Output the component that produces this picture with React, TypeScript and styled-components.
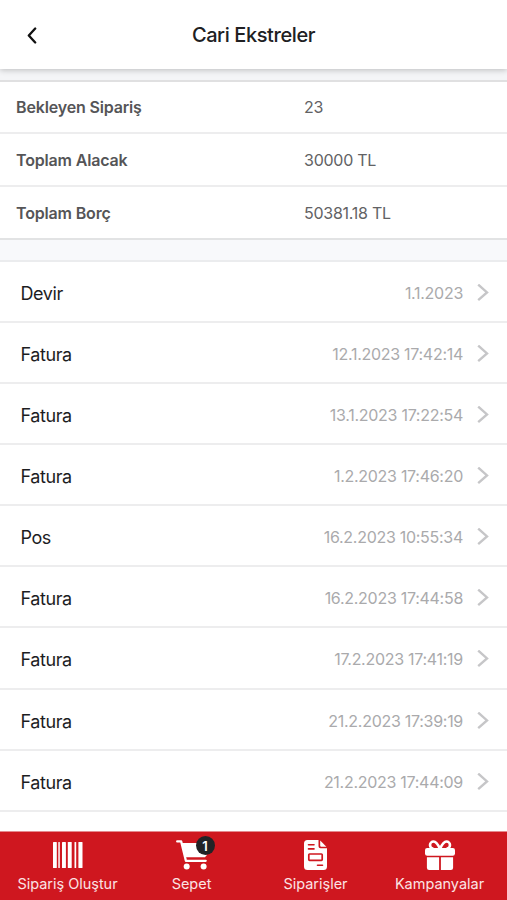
import React from "react";
import styled, { createGlobalStyle } from "styled-components";

const GlobalStyle = createGlobalStyle`
  * { box-sizing: border-box; }
  body { margin: 0; background: #fff; font-family: Inter, "Liberation Sans", sans-serif; }
`;

const Screen = styled.div`
  display: flex;
  flex-direction: column;
  height: 900px;
  overflow: hidden;
  background: #fff;
`;

const Header = styled.header`
  display: grid;
  grid-template-columns: 64px 1fr 64px;
  align-items: center;
  flex: none;
  height: 69px;
  background: #fff;
  box-shadow: 0 1px 6px rgba(0, 0, 0, 0.24);
  z-index: 1;
`;

const BackButton = styled.button`
  display: flex;
  align-items: center;
  justify-content: center;
  padding: 2px 0 0;
  border: 0;
  background: none;
  color: #111;
`;

const Title = styled.h1`
  margin: 1px 0 0;
  font-size: 20px;
  line-height: 24px;
  font-weight: 500;
  letter-spacing: -0.4px;
  text-align: center;
  color: #202022;
`;

const Summary = styled.dl`
  flex: none;
  margin: 0;
  padding-top: 11px;
  background: #f4f5f7;
`;

const SummaryRow = styled.div`
  display: grid;
  grid-template-columns: 288px 1fr;
  align-items: center;
  height: 53.2px;
  padding: 1px 16px 0;
  background: #fff;
  border-bottom: 2px solid #ededee;
  font-size: 16px;
  letter-spacing: -0.25px;
  &:first-child { height: 53.6px; padding-top: 0; border-top: 2px solid #e0e0e1; }
  &:last-child { border-bottom-color: #e2e3e4; }
`;

const Label = styled.dt`
  font-weight: 600;
  letter-spacing: -0.16px;
  color: #555557;
`;

const Value = styled.dd`
  margin: 0;
  color: #626264;
`;

const List = styled.ul`
  flex: 1;
  min-height: 0;
  overflow: hidden;
  margin: 0;
  padding: 20px 0 0;
  list-style: none;
  background: linear-gradient(#f8f9fb 21px, #fff 21px);
`;

const Item = styled.li`
  display: flex;
  align-items: center;
  height: 61.1px;
  padding: 3px 18px 0 20.5px;
  background: #fff;
  border-bottom: 2px solid #ededee;
  &:first-child { border-top: 2px solid #ebecee; height: 63px; }
`;

const Kind = styled.span`
  flex: 1;
  padding-top: 1px;
  font-size: 18px;
  letter-spacing: -0.42px;
  color: #1d1d1f;
`;

const DateText = styled.time`
  margin-right: 14px;
  font-size: 16px;
  letter-spacing: -0.28px;
  color: #aaaaac;
`;

const TabBar = styled.nav`
  display: grid;
  grid-template-columns: 135px 113px 135px 113px;
  flex: none;
  height: 69px;
  border-top: 1px solid #e58a8e;
  background: #cf171f;
  color: #fff;
`;

const Tab = styled.a`
  display: flex;
  flex-direction: column;
  align-items: center;
  padding-top: 6px;
`;

const TabIcon = styled.span`
  position: relative;
  display: flex;
  align-items: center;
  justify-content: center;
  width: 34px;
  height: 34px;
`;

const TabLabel = styled.span`
  margin-top: 2px;
  font-size: 14.5px;
  line-height: 20px;
  letter-spacing: -0.02px;
  white-space: nowrap;
  color: #fbe3e4;
`;

const Badge = styled.span`
  position: absolute;
  top: -2px;
  left: 21px;
  display: flex;
  align-items: center;
  justify-content: center;
  width: 19px;
  height: 19px;
  border-radius: 50%;
  background: #222326;
  font-size: 13px;
  font-weight: 600;
`;

const BackIcon = () => (
  <svg width="10" height="17" viewBox="0 0 10 17" fill="none">
    <path d="M8.2 1.5 1.8 8.5l6.4 7" stroke="currentColor" strokeWidth="2.3" strokeLinecap="round" strokeLinejoin="round" />
  </svg>
);

const Chevron = () => (
  <svg width="12" height="18" viewBox="0 0 12 18" fill="none">
    <path d="M1.2 .6 10 8.4l-8.8 7.8" stroke="#c6c6c8" strokeWidth="2.4" />
  </svg>
);

const BarcodeIcon = () => (
  <svg width="30" height="26" viewBox="0 0 30 26" fill="currentColor">
    <rect width="3.8" height="26" rx=".6" />
    <rect x="5.3" width="1.5" height="26" rx=".5" />
    <rect x="9" width="3.9" height="26" rx=".6" />
    <rect x="14.8" width="3.9" height="26" rx=".6" />
    <rect x="21.5" width="1.7" height="26" rx=".5" />
    <rect x="25.4" width="4.1" height="26" rx=".6" />
  </svg>
);

const CartIcon = () => (
  <svg width="32" height="30" viewBox="0 0 32 30">
    <path d="M5.5 3h25v12.6L29 17.2H9.2Z" fill="#fff" />
    <path d="M1.2 1.4h4l4.7 19.4h19.8" fill="none" stroke="#fff" strokeWidth="2.3" strokeLinecap="round" strokeLinejoin="round" />
    <circle cx="10.7" cy="26.6" r="3" fill="#fff" />
    <circle cx="27.6" cy="26.6" r="3" fill="#fff" />
  </svg>
);

const InvoiceIcon = () => (
  <svg width="23" height="30" viewBox="0 0 23 30">
    <path d="M3.5 0h11v6.2a2 2 0 0 0 2 2H23v18.3a3.5 3.5 0 0 1-3.5 3.5h-16A3.5 3.5 0 0 1 0 26.500v-23A3.500 3.500 0 0 1 3.500 0Z" fill="#fff" />
    <path d="M16.200 .6 22.400 6.700h-5.200a1 1 0 0 1-1-1Z" fill="#fff" />
    <path d="M4.500 4.700h5.500M4.500 8.900h5.500M13.500 25.200h5" stroke="#cf171f" strokeWidth="1.6" strokeLinecap="round" />
    <rect x="4.800" y="14" width="13.400" height="6.300" rx=".8" fill="none" stroke="#cf171f" strokeWidth="1.700" />
  </svg>
);

const GiftIcon = () => (
  <svg width="30" height="30" viewBox="0 0 30 30">
    <path d="M15 8.800C12.800 4 11 1.500 8.600 1.500a3.600 3.600 0 0 0 0 7.200M15 8.800C17.200 4 19 1.500 21.400 1.500a3.600 3.600 0 0 1 0 7.200" fill="none" stroke="#fff" strokeWidth="2.600" />
    <rect y="8" width="30" height="7.800" rx="2.200" fill="#fff" />
    <path d="M1.900 17.300h12.200V30H4.100a2.200 2.200 0 0 1-2.200-2.200ZM15.900 17.300h12.200v10.500a2.200 2.200 0 0 1-2.200 2.200h-10Z" fill="#fff" />
  </svg>
);

const summary = [
  ["Bekleyen Sipariş", "23"],
  ["Toplam Alacak", "30000 TL"],
  ["Toplam Borç", "50381.18 TL"],
];

const entries = [
  ["Devir", "1.1.2023"],
  ["Fatura", "12.1.2023 17:42:14"],
  ["Fatura", "13.1.2023 17:22:54"],
  ["Fatura", "1.2.2023 17:46:20"],
  ["Pos", "16.2.2023 10:55:34"],
  ["Fatura", "16.2.2023 17:44:58"],
  ["Fatura", "17.2.2023 17:41:19"],
  ["Fatura", "21.2.2023 17:39:19"],
  ["Fatura", "21.2.2023 17:44:09"],
];

const tabs: { label: string; icon: React.ReactNode; badge?: number }[] = [
  { label: "Sipariş Oluştur", icon: <BarcodeIcon /> },
  { label: "Sepet", icon: <CartIcon />, badge: 1 },
  { label: "Siparişler", icon: <InvoiceIcon /> },
  { label: "Kampanyalar", icon: <GiftIcon /> },
];

export default function App() {
  return (
    <Screen>
      <GlobalStyle />
      <Header>
        <BackButton aria-label="Geri"><BackIcon /></BackButton>
        <Title>Cari Ekstreler</Title>
      </Header>
      <Summary>
        {summary.map(([label, value]) => (
          <SummaryRow key={label}>
            <Label>{label}</Label>
            <Value>{value}</Value>
          </SummaryRow>
        ))}
      </Summary>
      <List>
        {entries.map(([kind, date]) => (
          <Item key={date}>
            <Kind>{kind}</Kind>
            <DateText>{date}</DateText>
            <Chevron />
          </Item>
        ))}
      </List>
      <TabBar>
        {tabs.map(({ label, icon, badge }) => (
          <Tab key={label}>
            <TabIcon>
              {icon}
              {badge && <Badge>{badge}</Badge>}
            </TabIcon>
            <TabLabel>{label}</TabLabel>
          </Tab>
        ))}
      </TabBar>
    </Screen>
  );
}
